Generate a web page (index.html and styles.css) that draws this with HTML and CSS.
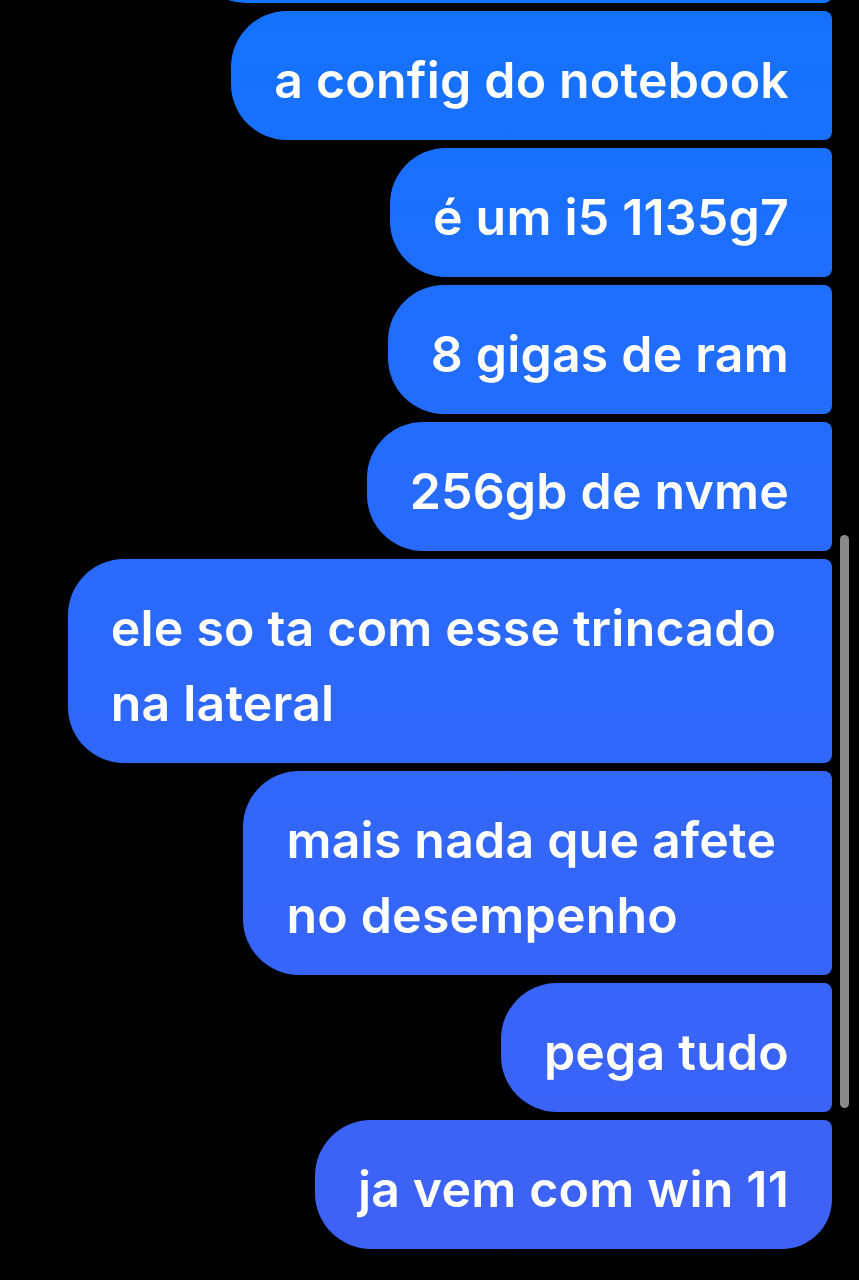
FILE: index.html
```html
<!DOCTYPE html>
<html lang="pt-BR">
<head>
    <meta charset="UTF-8">
    <meta name="viewport" content="width=device-width, initial-scale=1.0">
    <title>Mensagens</title>
    <link rel="stylesheet" href="styles.css">
</head>
<body>
    <div class="thread">
        <div class="bubble bubble-cut" aria-hidden="true">&nbsp;</div>
        <div class="bubble">a config do notebook</div>
        <div class="bubble">é um i5 1135g7</div>
        <div class="bubble">8 gigas de ram</div>
        <div class="bubble">256gb de nvme</div>
        <div class="bubble">ele so ta com esse trincado&nbsp;<br>na lateral</div>
        <div class="bubble">mais nada que afete&nbsp;<br>no desempenho</div>
        <div class="bubble">pega tudo</div>
        <div class="bubble bubble-last">ja vem com win 11</div>
    </div>
    <div class="scrollbar"></div>
</body>
</html>
```

FILE: styles.css
```css
html, body {
    margin: 0;
    height: 100%;
    background-color: #000;
    overflow: hidden;
}
body {
    font-family: Inter, "Noto Sans", sans-serif;
    position: relative;
}
.thread {
    display: flex;
    flex-direction: column;
    align-items: flex-end;
    gap: 8px;
    padding: 0 27px 0 0;
}
.bubble {
    box-sizing: border-box;
    padding: 32px 43px 22px;
    font-size: 50px;
    font-weight: 600;
    letter-spacing: 0.2px;
    line-height: 75px;
    color: #fff;
    border-radius: 56px 8px 8px 56px;
    background: linear-gradient(180deg, #1472ff 0%, #2c69fb 50%, #4061f5 100%) fixed;
    white-space: nowrap;
}
.bubble-cut {
    width: 642px;
    margin-top: -126px;
}
.bubble-last {
    border-radius: 56px 8px 50px 56px;
}
.scrollbar {
    position: absolute;
    top: 535px;
    left: 840px;
    width: 9px;
    height: 573px;
    border-radius: 5px;
    background-color: #8a8a8a;
}
```
